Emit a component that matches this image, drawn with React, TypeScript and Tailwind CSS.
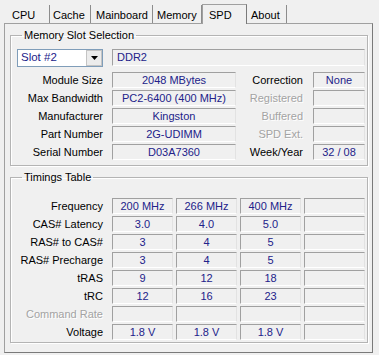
import * as React from "react"

const font = { fontFamily: '"Liberation Sans", Arial, sans-serif' }

const field =
  "h-[16px] border border-t-[#a0a0a0] border-l-[#a0a0a0] border-r-[#e2e2e2] border-b-white bg-[#f0f0f0] text-[#22228a] text-center leading-[14px] whitespace-nowrap"

const label = "text-right leading-[16px] text-black whitespace-nowrap"
const dim = "text-right leading-[16px] text-[#a3a3a3] whitespace-nowrap [text-shadow:1px_1px_0_#ffffff]"

function Tab({ name, w, pl, active }: { name: string; w: string; pl: string; active?: boolean }) {
  if (active) {
    return (
      <div className={"relative z-10 -mb-px h-[20px] border border-b-0 border-[#a0a0a0] border-r-[#7a7a7a] bg-[#f0f0f0] pt-[3px] leading-[14px] " + w + " " + pl}>
        {name}
      </div>
    )
  }
  return (
    <div className={"mt-[2px] h-[18px] border-r border-[#8c8c8c] pt-[3px] leading-[14px] " + w + " " + pl}>
      {name}
    </div>
  )
}

function GroupBox({ title, children, className }: { title: string; children: React.ReactNode; className?: string }) {
  return (
    <fieldset className={"border border-[#b4b4b4] shadow-[inset_1px_1px_0_#ffffff,1px_1px_0_#ffffff] " + (className ?? "")}>
      <legend className="ml-[5px] px-[2px] leading-[14px]">{title}</legend>
      {children}
    </fieldset>
  )
}

const info = [
  { l: "Module Size", v: "2048 MBytes", r: "Correction", rv: "None", rd: false },
  { l: "Max Bandwidth", v: "PC2-6400 (400 MHz)", r: "Registered", rv: "", rd: true },
  { l: "Manufacturer", v: "Kingston", r: "Buffered", rv: "", rd: true },
  { l: "Part Number", v: "2G-UDIMM", r: "SPD Ext.", rv: "", rd: true },
  { l: "Serial Number", v: "D03A7360", r: "Week/Year", rv: "32 / 08", rd: false },
]

const timings = [
  { l: "Frequency", v: ["200 MHz", "266 MHz", "400 MHz", ""] },
  { l: "CAS# Latency", v: ["3.0", "4.0", "5.0", ""] },
  { l: "RAS# to CAS#", v: ["3", "4", "5", ""] },
  { l: "RAS# Precharge", v: ["3", "4", "5", ""] },
  { l: "tRAS", v: ["9", "12", "18", ""] },
  { l: "tRC", v: ["12", "16", "23", ""] },
  { l: "Command Rate", v: ["", "", "", ""], dim: true },
  { l: "Voltage", v: ["1.8 V", "1.8 V", "1.8 V", ""] },
]

export default function App() {
  return (
    <div className="h-[355px] w-[379px] bg-[#f0f0f0] pt-[3px] text-[11px] text-black" style={font}>
      <div className="ml-[4px] flex items-end">
        <Tab name="CPU" w="w-[46px]" pl="pl-[8px]" />
        <Tab name="Cache" w="w-[41px]" pl="pl-[3px]" />
        <Tab name="Mainboard" w="w-[62px]" pl="pl-[5px]" />
        <Tab name="Memory" w="w-[49px]" pl="pl-[4px]" />
        <Tab name="SPD" w="w-[45px]" pl="pl-[6px]" active />
        <Tab name="About" w="w-[40px]" pl="pl-[4px]" />
      </div>

      <div className="ml-[4px] mr-[6px] h-[330px] border border-[#a0a0a0] border-r-[#7a7a7a] border-b-[#7a7a7a] bg-[#f0f0f0] px-[5px] pt-[4px]">
        <GroupBox title="Memory Slot Selection" className="h-[138px] pl-[6px] pr-[2px]">
          <div className="mt-[7px] flex gap-[9px]">
            <div className="flex h-[18px] w-[86px] items-center border border-[#7f9db9] bg-white">
              <span className="flex-1 pl-[3px] text-[#22228a] text-[11.5px]">Slot #2</span>
              <div className="flex h-[16px] w-[16px] items-center justify-center border border-[#c4c4c4] bg-[#ececec]">
                <svg width="7" height="4" viewBox="0 0 7 4">
                  <path d="M0 0h7L3.5 4z" fill="#000" />
                </svg>
              </div>
            </div>
            <div className={field + " h-[17px] w-[253px] text-left pl-[4px] leading-[15px]"}>DDR2</div>
          </div>
          <div className="mt-[5px] flex flex-col gap-[2px]">
            {info.map((row) => (
              <div key={row.l} className="flex items-center">
                <div className={label + " w-[86px]"}>{row.l}</div>
                <div className={field + " ml-[9px] w-[124px]"}>{row.v}</div>
                <div className={(row.rd ? dim : label) + " w-[67px]"}>{row.r}</div>
                <div className={field + " ml-[10px] w-[52px]"}>{row.rv}</div>
              </div>
            ))}
          </div>
        </GroupBox>

        <GroupBox title="Timings Table" className="mt-[4px] h-[173px] pl-[6px] pr-[2px]">
          <div className="mt-[14px] flex flex-col gap-[2px]">
            {timings.map((row) => (
              <div key={row.l} className="flex items-center">
                <div className={(row.dim ? dim : label) + " w-[86px]"}>{row.l}</div>
                <div className="ml-[9px] grid grid-cols-4 gap-[3px] w-[253px]">
                  {row.v.map((v, i) => (
                    <div key={i} className={field}>{v}</div>
                  ))}
                </div>
              </div>
            ))}
          </div>
        </GroupBox>
      </div>
    </div>
  )
}
